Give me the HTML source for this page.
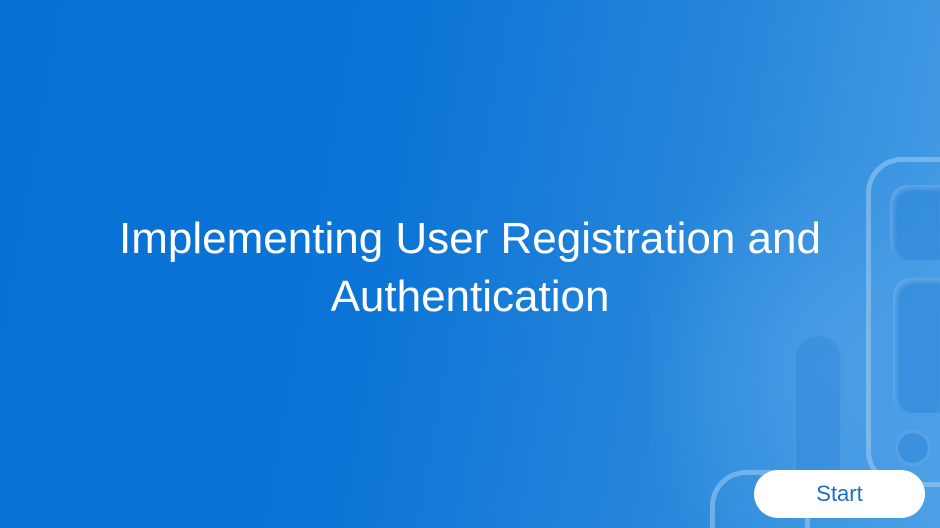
<!DOCTYPE html>
<html><head><style>
html,body{margin:0;padding:0;width:940px;height:528px;overflow:hidden;}
body{position:relative;
background:linear-gradient(100deg,#0870d3 0%,#0b74d6 40%,#2585da 70%,#4a9fe5 100%);
font-family:"Liberation Sans",sans-serif;}
.glow{position:absolute;left:650px;top:120px;width:290px;height:408px;
background:radial-gradient(circle at 60% 60%,rgba(110,180,240,0.3),rgba(110,180,240,0) 70%);}
.s{position:absolute;box-sizing:border-box;}
h1{position:absolute;left:0;width:940px;top:210px;margin:0;text-align:center;color:#fff;
font-weight:normal;font-size:44px;line-height:58px;}
.btn{position:absolute;left:754px;top:470px;width:171px;height:48px;border-radius:24px;background:#fff;
color:#1a6fc4;font-size:22px;text-align:center;line-height:48px;}
</style></head><body>
<div class="glow"></div>
<div class="s" style="left:866px;top:157px;width:74px;height:330px;border:5px solid rgba(170,210,245,0.5);border-right:none;border-radius:36px 0 0 36px;"></div>
<div class="s" style="left:890px;top:185px;width:50px;height:75px;border-radius:18px 0 0 18px;background:rgba(40,130,215,0.5);box-shadow:inset 3px 3px 6px rgba(150,200,245,0.5);"></div>
<div class="s" style="left:893px;top:278px;width:47px;height:135px;border-radius:18px 0 0 18px;background:rgba(40,130,215,0.5);box-shadow:inset 3px 3px 6px rgba(150,200,245,0.5);"></div>
<div class="s" style="left:793px;top:333px;width:50px;height:175px;border-radius:25px;background:rgba(40,130,215,0.35);border:3px solid rgba(90,160,230,0.5);"></div>
<div class="s" style="left:895px;top:430px;width:36px;height:36px;border-radius:50%;background:rgba(40,130,215,0.45);border:3px solid rgba(120,180,235,0.5);"></div>
<div class="s" style="left:710px;top:470px;width:100px;height:58px;border:5px solid rgba(170,210,245,0.5);border-bottom:none;border-radius:36px 36px 0 0;"></div>
<h1>Implementing User Registration and<br>Authentication</h1>
<div class="btn">Start</div>
</body></html>
